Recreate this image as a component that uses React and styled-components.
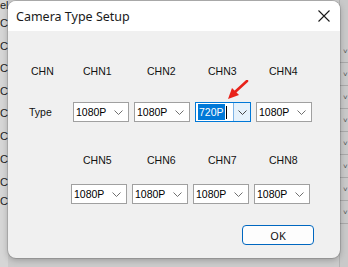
import React from 'react';
import styled, { createGlobalStyle } from 'styled-components';

const GlobalStyle = createGlobalStyle`
  html, body { margin: 0; padding: 0; }
  body {
    width: 348px;
    height: 267px;
    overflow: hidden;
    background: #cfcfcf;
    font-family: "Liberation Sans", Arial, sans-serif;
  }
`;

// BACKDROP (the window behind the dialog)
const Backdrop = styled.div`
  position: relative;
  width: 348px;
  height: 267px;
  display: flex;
  justify-content: space-between;
  background: #cbcbcb;
`;

const LeftStrip = styled.div`
  width: 8px;
  overflow: hidden;
  display: flex;
  flex-direction: column;
  background: #d6d6d6;
  font-size: 11px;
  color: #222;
  white-space: nowrap;
`;

const StripText = styled.div`
  height: ${p => p.h}px;
  line-height: ${p => p.h}px;
`;

const RightStrip = styled.div`
  width: 8px;
  overflow: hidden;
  display: flex;
  flex-direction: column;
  padding-top: 40px;
  background: #c9c9c9;
  border-left: 1px solid #b3b3b3;
`;

const StripRow = styled.div`
  height: 22px;
  flex: none;
  border-bottom: 1px solid #a9a9a9;
  display: flex;
  align-items: center;
  padding-left: 3px;
  color: #555;
  font-size: 8px;
`;

// DIALOG
const Dialog = styled.div`
  position: absolute;
  left: 8px;
  top: 1px;
  width: 332px;
  height: 257px;
  border-radius: 8px;
  overflow: hidden;
  background: #f0f0f0;
  box-shadow: 0 2px 6px rgba(0, 0, 0, 0.25), 0 0 0 1px rgba(0, 0, 0, 0.12);
  display: flex;
  flex-direction: column;
`;

const TitleBar = styled.div`
  height: 30px;
  flex: none;
  background: #ffffff;
  display: flex;
  align-items: center;
  justify-content: space-between;
  padding: 0 10px 0 8px;
  font-family: "Noto Sans", "Open Sans", sans-serif;
  font-size: 12.5px;
  color: #1a1a1a;
`;

const CloseBtn = styled.div`
  width: 12px;
  height: 12px;
  display: flex;
`;

const Body = styled.div`
  flex: 1;
  display: flex;
  flex-direction: column;
  padding: 34px 0 0 21px;
`;

const Grid = styled.div`
  display: grid;
  grid-template-columns: 39px repeat(4, 56px);
  column-gap: 5px;
  align-items: center;
  margin-top: ${p => p.mt || 0}px;
  margin-left: ${p => p.shift || 0}px;
`;

const Label = styled.div`
  font-size: 10.5px;
  color: #111;
  height: 12px;
  line-height: 12px;
  padding-left: ${p => p.pad || 0}px;
`;

const Select = styled.div`
  height: 20px;
  box-sizing: border-box;
  background: #ffffff;
  border: 1px solid ${p => (p.active ? '#0078d7' : '#a0a0a0')};
  display: flex;
  align-items: stretch;
  font-size: 10.5px;
  color: #000;
`;

const SelectValue = styled.div`
  flex: 1;
  display: flex;
  align-items: center;
  padding-left: 2px;
`;

const Highlight = styled.span`
  background: #0078d7;
  color: #ffffff;
  padding: 3px 1px;
  line-height: 10px;
`;

const Caret = styled.span`
  width: 1px;
  height: 13px;
  background: #000;
  margin-left: 1px;
`;

const DropBtn = styled.div`
  width: ${p => (p.active ? 16 : 14)}px;
  display: flex;
  align-items: center;
  justify-content: center;
  background: ${p => (p.active ? '#e5f1fb' : 'transparent')};
  border-left: ${p => (p.active ? '1px solid #7fb4e6' : 'none')};
  margin-right: ${p => (p.active ? 0 : 3)}px;
`;

const Footer = styled.div`
  display: flex;
  justify-content: flex-end;
  padding-right: 26px;
  margin-top: 21px;
`;

const OkButton = styled.button`
  width: 72px;
  height: 20px;
  box-sizing: border-box;
  border: 1px solid #0067c0;
  border-radius: 4px;
  background: #fdfdfd;
  font-family: "Noto Sans", "Open Sans", sans-serif;
  font-size: 11px;
  color: #111;
  padding: 0;
`;

const ArrowMark = styled.svg`
  position: absolute;
  left: 224px;
  top: 80px;
`;

const Chevron = ({ dark }) => (
  <svg width="9" height="5" viewBox="0 0 9 5">
    <path d="M0.5 0.5 L4.5 4.5 L8.5 0.5" fill="none" stroke={dark ? '#333' : '#606060'} strokeWidth="0.9" />
  </svg>
);

const Combo = ({ value, active }) => (
  <Select active={active}>
    <SelectValue>
      {active ? (
        <>
          <Highlight>{value}</Highlight>
          <Caret />
        </>
      ) : (
        value
      )}
    </SelectValue>
    <DropBtn active={active}>
      <Chevron dark={active} />
    </DropBtn>
  </Select>
);

const leftRows = [
  { t: 'el', h: 11 },
  { t: ' C', h: 24 },
  { t: 'CH', h: 22 },
  { t: 'CH', h: 23 },
  { t: 'CH', h: 22 },
  { t: 'CH', h: 23 },
  { t: 'CH', h: 23 },
  { t: 'CH', h: 23 },
  { t: 'CH', h: 22 },
  { t: 'CH', h: 16 },
];

const App = () => {
  const top = ['1080P', '1080P', '720P', '1080P'];
  const bottom = ['1080P', '1080P', '1080P', '1080P'];

  return (
    <>
      <GlobalStyle />
      <Backdrop>
        <LeftStrip>
          {leftRows.map((r, i) => (
            <StripText key={i} h={r.h}>{r.t}</StripText>
          ))}
        </LeftStrip>
        <RightStrip>
          {Array.from({ length: 8 }).map((_, i) => (
            <StripRow key={i}>˅</StripRow>
          ))}
        </RightStrip>

        <Dialog>
          <TitleBar>
            <span>Camera Type Setup</span>
            <CloseBtn>
              <svg width="12" height="12" viewBox="0 0 12 12">
                <path d="M0.5 0.5 L11.5 11.5 M11.5 0.5 L0.5 11.5" stroke="#1a1a1a" strokeWidth="1.1" />
              </svg>
            </CloseBtn>
          </TitleBar>
          <Body>
            <Grid>
              <Label pad={2}>CHN</Label>
              <Label pad={10}>CHN1</Label>
              <Label pad={13}>CHN2</Label>
              <Label pad={13}>CHN3</Label>
              <Label pad={13}>CHN4</Label>
            </Grid>
            <Grid mt={25}>
              <Label>Type</Label>
              {top.map((v, i) => (
                <Combo key={i} value={v} active={i === 2} />
              ))}
            </Grid>
            <Grid mt={32}>
              <span />
              <Label pad={10}>CHN5</Label>
              <Label pad={13}>CHN6</Label>
              <Label pad={13}>CHN7</Label>
              <Label pad={13}>CHN8</Label>
            </Grid>
            <Grid mt={18} shift={-2}>
              <span />
              {bottom.map((v, i) => (
                <Combo key={i} value={v} />
              ))}
            </Grid>
            <Footer>
              <OkButton>OK</OkButton>
            </Footer>
          </Body>
        </Dialog>

        <ArrowMark width="26" height="22" viewBox="0 0 26 22">
          <path d="M23 1 L11 12" stroke="#e8231b" strokeWidth="2.6" strokeLinecap="round" />
          <path d="M4 19 L8 8 L15 15 Z" fill="#e8231b" />
        </ArrowMark>
      </Backdrop>
    </>
  );
};

export default App;
